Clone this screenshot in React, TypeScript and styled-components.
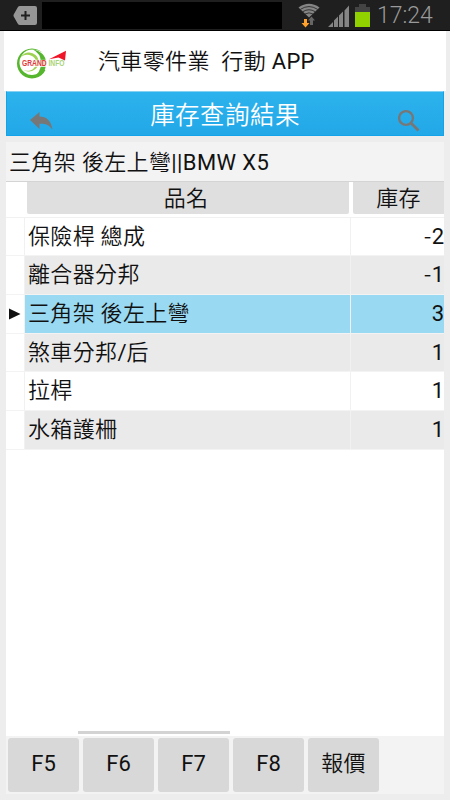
import React from "react";
import styled, { createGlobalStyle } from "styled-components";

const GlobalStyle = createGlobalStyle`
  * { box-sizing: border-box; }
  body {
    margin: 0;
    background: #ededed;
    color: #111;
    font-family: Roboto, "Noto Sans CJK TC", sans-serif;
    font-size: 22px;
  }
`;

const Screen = styled.div`
  width: 450px;
  height: 800px;
  display: flex;
  flex-direction: column;
  overflow: hidden;
  background: #ededed;
`;

const Cjk = styled.span`
  font-family: "Noto Sans CJK TC DemiLight", "Noto Sans CJK TC", sans-serif;
  font-weight: 350;
  line-height: 0;
  letter-spacing: 0.35px;
`;

const StatusBar = styled.header`
  height: 31px;
  flex: none;
  display: flex;
  align-items: flex-start;
  background: #1f1f1f;
  border-bottom: 1px solid #000;
`;

const Notification = styled.svg`
  width: 24px;
  height: 20px;
  margin: 5px 5px 0 13px;
`;

const Blackout = styled.div`
  width: 240px;
  height: 27px;
  margin-top: 2px;
  background: #000;
`;

const Indicators = styled.svg`
  width: 74px;
  height: 30px;
  margin-left: 15px;
`;

const Clock = styled.time`
  margin-left: 6px;
  line-height: 32px;
  font-size: 23px;
  font-weight: 300;
  color: #9a9a9a;
`;

const Brand = styled.div`
  height: 60px;
  flex: none;
  margin: 0 4px;
  display: flex;
  align-items: center;
  background: #fff;
`;

const Logo = styled.svg`
  width: 54px;
  height: 34px;
  margin: 4px 30px 0 10px;
`;

const BrandName = styled.div`
  margin-top: 2px;
  line-height: 30px;
  letter-spacing: 0.3px;
  white-space: pre;
`;

const TitleBar = styled.div`
  height: 45px;
  flex: none;
  margin: 0 6px;
  display: grid;
  grid-template-columns: 75px 1fr 75px;
  background: linear-gradient(#2cb2ec, #23a8e8);
  border: 1px solid #12a3ea;
  border-top-color: #86d0f2;
`;

const Title = styled.h1`
  margin: 0;
  text-align: center;
  color: #fff;
  font-size: 24.6px;
  font-weight: 400;
  line-height: 47px;
`;

const BackIcon = styled.svg`
  width: 24px;
  height: 19px;
  margin: 20px 0 0 23px;
`;

const SearchIcon = styled.svg`
  width: 22px;
  height: 22px;
  margin: 18px 0 0 30px;
`;

const Query = styled.div`
  height: 39px;
  flex: none;
  margin: 6px 6px 0;
  padding-left: 3px;
  line-height: 41px;
  letter-spacing: 0.4px;
  background: #f3f3f3;
  white-space: pre;
`;

const Grid = styled.main`
  flex: 1;
  margin: 0 6px;
  display: flex;
  flex-direction: column;
  background: #fff;
`;

const HeadRow = styled.div`
  height: 36.5px;
  display: grid;
  grid-template-columns: 19px 326px 1fr;
  border-top: 1px solid #d4d4d4;
  border-bottom: 1px solid #f1f1f1;
`;

const HeadCell = styled.div<{ $last?: boolean }>`
  height: 32px;
  margin: 0 ${(p) => (p.$last ? "0" : "2px")} 0 2px;
  padding-right: ${(p) => (p.$last ? "0" : "4px")};
  border-radius: ${(p) => (p.$last ? "0 0 0 2px" : "0 0 2px 2px")};
  background: #dfdfdf;
  line-height: 34px;
  text-align: center;
`;

const Row = styled.div`
  height: 38.7px;
  display: grid;
  grid-template-columns: 19px 326px 1fr;
  border-bottom: 1px solid #f3f3f3;
`;

const Marker = styled.div`
  display: flex;
  align-items: center;
  padding-left: 3px;
  border-right: 1px solid #f1f1f1;
`;

const Cell = styled.div<{ $bg: string; $num?: boolean }>`
  height: 37.7px;
  background: ${(p) => p.$bg};
  padding-left: 3px;
  border-right: ${(p) => (p.$num ? "0" : "1px solid #f1f1f1")};
  line-height: 38px;
  text-align: ${(p) => (p.$num ? "right" : "left")};
  white-space: pre;
`;

const ScrollThumb = styled.div`
  width: 152px;
  height: 3px;
  margin: auto 0 2px 72px;
  background: #d3d3d3;
`;

const ActionBar = styled.footer`
  height: 58px;
  flex: none;
  margin: 0 6px 6px;
  padding: 2px;
  display: flex;
  gap: 4px;
  background: #f3f3f3;
`;

const ActionButton = styled.button`
  width: 71px;
  height: 54px;
  padding: 0 0 2px;
  border: 0;
  border-radius: 3px;
  background: #d8d8d8;
  color: #111;
  font: inherit;
  line-height: 50px;
`;

const parts = [
  { name: "保險桿 總成", stock: "-2" },
  { name: "離合器分邦", stock: "-1" },
  { name: "三角架 後左上彎", stock: "3" },
  { name: "煞車分邦/后", stock: "1" },
  { name: "拉桿", stock: "1" },
  { name: "水箱護柵", stock: "1" },
];
const selected = 2;

const actions = ["F5", "F6", "F7", "F8", "報價"];

const rowColor = (i: number) =>
  i === selected ? "#99d9f2" : i === 0 || i === 4 ? "#fff" : "#eaeaea";

/* Renders Chinese runs and minus signs in the CJK face, the rest in Roboto. */
const Mixed = ({ text }: { text: string }) => (
  <>
    {text
      .split(/([\u4e00-\u9fff-]+)/)
      .filter(Boolean)
      .map((run, i) => (/[\u4e00-\u9fff-]/.test(run) ? <Cjk key={i}>{run}</Cjk> : run))}
  </>
);

export default function App() {
  return (
    <Screen>
      <GlobalStyle />
      <StatusBar>
        <Notification viewBox="0 0 24 20">
          <path d="M7 1H22Q24 1 24 3V18Q24 20 22 20H7Q5.500 20 4.800 18.700L.7 11.500Q.2 10.500.7 9.500L4.800 2.300Q5.500 1 7 1Z" fill="#969696" />
          <path d="M12.500 6V15M8 10.500H17" stroke="#1f1f1f" strokeWidth="2" />
        </Notification>
        <Blackout />
        <Indicators viewBox="0 0 74 30">
          <path d="M12 17.500L1.500 7.500Q12 0 22.500 7.500Z" fill="#858585" />
          <g fill="none" stroke="#1f1f1f" strokeWidth="0.800">
            <path d="M3.500 9.300Q12 3.800 20.500 9.300" />
            <path d="M5.800 11.700Q12 7.800 18.200 11.700" />
            <path d="M8 14Q12 11.700 16 14" />
          </g>
          <path d="M7 19H10V23H12.500L8.500 27.500L4.500 23H7Z" fill="#ffa12b" />
          <path d="M13 25V20.500H11L14.500 16.500L18 20.500H16V25Z" fill="#666" />
          <path d="M31 27L36 22V27ZM37 27V20.500L41 16.500V27ZM42 27V15.500L46 11.500V27ZM47.500 27V10.500L52 5.500V27Z" fill="#858585" />
          <path d="M58 12V7H62V4H69V7H73V12Z" fill="#444" />
          <rect x="58" y="12" width="15" height="15" fill="#91d100" />
        </Indicators>
        <Clock>17:24</Clock>
      </StatusBar>

      <Brand>
        <Logo viewBox="0 0 54 34">
          <path d="M31.500 24A15 15 0 1 1 31.500 11A13 11 0 0 0 8 9A11 11 0 1 0 28 24Z" fill="#56b62d" />
          <path d="M18 3Q27 7 27 17Q27 27 18 32Q32 30 32 17Q32 6 18 3Z" fill="#56b62d" />
          <path d="M7 11A9.500 9.500 0 1 1 6.500 20A8 8 0 0 0 20 22A7.500 7.500 0 0 0 18 10Q12 7 7 11Z" fill="#9ed252" />
          <rect x="7.500" y="13.800" width="26" height="7.200" fill="#fff" fillOpacity="0.800" />
          <path d="M35 13.300L52 4.800L51 14.500L44.500 11.500Z" fill="#f01428" />
          <g transform="translate(8 20.300) scale(1 1.250)" fontFamily="Liberation Sans" fontWeight="700" fontSize="6.700">
            <text fill="#e13a3a">GRAND</text>
            <text x="26.500" fill="#a9d47a">INFO</text>
          </g>
        </Logo>
        <BrandName><Mixed text="汽車零件業  行動 APP" /></BrandName>
      </Brand>

      <TitleBar>
        <BackIcon viewBox="0 0 24 19">
          <path d="M0 8L9.500 0V4.500C16 4.500 21 8 22.500 17.500C18 12 14 11.500 9.500 11.800V17Z" fill="#777" />
        </BackIcon>
        <Title><Cjk>庫存查詢結果</Cjk></Title>
        <SearchIcon viewBox="0 0 22 22" fill="none" stroke="#777" strokeWidth="2.300">
          <circle cx="8" cy="8" r="6.900" />
          <path d="M13.200 13.200L20.500 20.500" strokeWidth="2.800" />
        </SearchIcon>
      </TitleBar>

      <Query><Mixed text="三角架 後左上彎||BMW X5" /></Query>

      <Grid>
        <HeadRow>
          <span />
          <HeadCell><Cjk>品名</Cjk></HeadCell>
          <HeadCell $last><Cjk>庫存</Cjk></HeadCell>
        </HeadRow>
        {parts.map((part, i) => (
          <Row key={part.name}>
            <Marker>
              {i === selected && (
                <svg width="12" height="12" viewBox="0 0 12 12">
                  <path d="M0 .5L11.500 6L0 11.500Z" fill="#111" />
                </svg>
              )}
            </Marker>
            <Cell $bg={rowColor(i)}><Mixed text={part.name} /></Cell>
            <Cell $bg={rowColor(i)} $num><Mixed text={part.stock} /></Cell>
          </Row>
        ))}
        <ScrollThumb />
      </Grid>

      <ActionBar>
        {actions.map((label) => (
          <ActionButton key={label}><Mixed text={label} /></ActionButton>
        ))}
      </ActionBar>
    </Screen>
  );
}
